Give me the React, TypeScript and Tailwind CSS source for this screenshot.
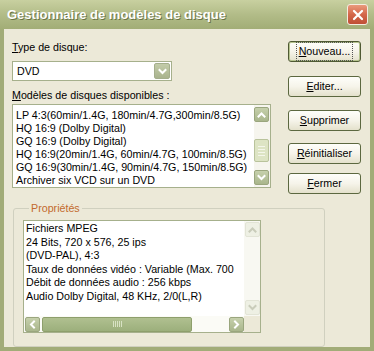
import React from 'react';

const font = "font-['Liberation_Sans',Arial,sans-serif]";

function Chevron({ dir, className }: { dir: 'up' | 'down' | 'left' | 'right'; className?: string }) {
  const d = {
    up: 'M2.5 7.5 L5.5 4.5 L8.5 7.5',
    down: 'M2.5 4 L5.5 7 L8.5 4',
    left: 'M7 2.5 L4 5.5 L7 8.5',
    right: 'M4 2.5 L7 5.5 L4 8.5',
  }[dir];
  return (
    <svg viewBox="0 0 11 11" className={className} width="11" height="11">
      <path d={d} fill="none" stroke="currentColor" strokeWidth="2" strokeLinecap="square" />
    </svg>
  );
}

function ArrowBtn({ dir, faded }: { dir: 'up' | 'down' | 'left' | 'right'; faded?: boolean }) {
  return (
    <div
      className={
        faded
          ? 'w-[15px] h-[15px] shrink-0 rounded-[2px] border border-[#e2e4d6] bg-[#eef0e4] flex items-center justify-center text-[#c9ccba]'
          : 'w-[15px] h-[15px] shrink-0 rounded-[2px] border border-[#9aa67e] bg-gradient-to-b from-[#c6d0ac] to-[#a9b68c] flex items-center justify-center text-white'
      }
    >
      <Chevron dir={dir} />
    </div>
  );
}

function Btn({ label, accel, def }: { label: string; accel: number; def?: boolean }) {
  return (
    <div
      className={
        'w-[73px] h-[21px] rounded-[3px] border flex items-center justify-center bg-gradient-to-b from-[#fefefa] via-[#f6f4ea] to-[#e4e1cc] ' +
        (def ? 'border-[#4f5a33] shadow-[inset_0_0_0_1px_#b6c48e]' : 'border-[#5c6840]')
      }
    >
      <span className={def ? 'px-[2px] border border-dotted border-[#555]' : ''}>
        {label.slice(0, accel)}
        <span className="underline">{label[accel]}</span>
        {label.slice(accel + 1)}
      </span>
    </div>
  );
}

export default function App() {
  const models = [
    'LP 4:3(60min/1.4G, 180min/4.7G,300min/8.5G)',
    'HQ 16:9 (Dolby Digital)',
    'GQ 16:9 (Dolby Digital)',
    'HQ 16:9(20min/1.4G, 60min/4.7G, 100min/8.5G)',
    'GQ 16:9(30min/1.4G, 90min/4.7G, 150min/8.5G)',
    'Archiver six VCD sur un DVD',
  ];
  const props = [
    'Fichiers MPEG',
    '24 Bits, 720 x 576, 25 ips',
    '(DVD-PAL),  4:3',
    'Taux de données vidéo : Variable  (Max.  700',
    'Débit de données audio : 256 kbps',
    'Audio Dolby Digital, 48 KHz, 2/0(L,R)',
  ];

  return (
    <div className={`w-[374px] h-[351px] bg-[#a2ac78] flex flex-col text-[10.7px] text-black ${font}`}>
      {/* title bar */}
      <div className="h-[29px] shrink-0 flex items-center pl-[7px] pr-[6px] bg-gradient-to-b from-[#c8d0a0] via-[#b2bc88] to-[#a2ad76]">
        <div className="flex-1 text-white font-bold text-[13px] [text-shadow:1px_1px_0_#6a7446]">
          Gestionnaire de modèles de disque
        </div>
        <div className="w-[21px] h-[21px] rounded-[3px] border border-[#f4ece0] bg-gradient-to-b from-[#e99a7c] via-[#d4674a] to-[#bf4f35] flex items-center justify-center">
          <svg viewBox="0 0 12 12" width="12" height="12">
            <path d="M2 2 L10 10 M10 2 L2 10" stroke="white" strokeWidth="2.2" strokeLinecap="round" />
          </svg>
        </div>
      </div>

      {/* body */}
      <div className="flex-1 mx-[4px] mb-[4px] bg-[#ece9d8] pl-[8px] pt-[12px] flex flex-col">
        <div className="flex">
          <div className="w-[259px] flex flex-col">
            <div className="h-[13px] leading-[13px]">
              <span className="underline">T</span>ype de disque:
            </div>
            <div className="mt-[7px] w-[160px] h-[20px] border border-[#a6b08c] bg-white flex items-center">
              <div className="flex-1 pl-[4px]">DVD</div>
              <div className="w-[16px] h-[16px] mr-[1px] rounded-[2px] border border-[#a4ae8c] bg-gradient-to-b from-[#c3cca9] to-[#a9b38e] flex items-center justify-center text-white">
                <Chevron dir="down" />
              </div>
            </div>
            <div className="mt-[8px] h-[13px] leading-[13px]">
              <span className="underline">M</span>odèles de disques disponibles :
            </div>
            <div className="mt-[2px] h-[84px] border border-[#a6b08c] bg-white flex">
              <div className="flex-1 overflow-hidden whitespace-nowrap pl-[3px] pt-[4px] leading-[13px]">
                {models.map((m) => (
                  <div key={m}>{m}</div>
                ))}
              </div>
              <div className="w-[16px] py-[2px] pr-[1px] flex flex-col items-center bg-[#f6f5ee]">
                <ArrowBtn dir="up" />
                <div className="flex-1 flex flex-col items-center pt-[17px]">
                  <div className="w-[15px] h-[23px] rounded-[2px] border border-[#b9c39c] bg-[#dde4c4] flex flex-col items-center justify-center gap-[2px]">
                    <div className="w-[7px] h-px bg-[#f4f6ea]" />
                    <div className="w-[7px] h-px bg-[#f4f6ea]" />
                    <div className="w-[7px] h-px bg-[#f4f6ea]" />
                    <div className="w-[7px] h-px bg-[#f4f6ea]" />
                  </div>
                </div>
                <ArrowBtn dir="down" />
              </div>
            </div>
          </div>

          <div className="ml-[17px] flex flex-col">
            <Btn label="Nouveau..." accel={0} def />
            <div className="mt-[14px]"><Btn label="Editer..." accel={0} /></div>
            <div className="mt-[13px]"><Btn label="Supprimer" accel={0} /></div>
            <div className="mt-[12px]"><Btn label="Réinitialiser" accel={0} /></div>
            <div className="mt-[9px]"><Btn label="Fermer" accel={0} /></div>
          </div>
        </div>

        {/* group box */}
        <fieldset className="mt-[8px] ml-[1px] w-[312px] border border-[#d0d0bf] rounded-[3px] px-[9px] pb-[13px]">
          <legend className="ml-[6px] px-[2px] leading-[13px] text-[#c3692d]">Propriétés</legend>
          <div className="mt-[5px] w-[238px] h-[113px] border border-[#a6b08c] bg-white flex flex-col">
            <div className="flex-1 flex min-h-0">
              <div className="flex-1 overflow-hidden whitespace-nowrap pl-[2px] pt-[1px] leading-[13.5px]">
                {props.map((p) => (
                  <div key={p}>{p}</div>
                ))}
              </div>
              <div className="w-[16px] flex flex-col items-center py-[1px] bg-[#f8f8f2]">
                <ArrowBtn dir="up" faded />
                <div className="flex-1" />
                <ArrowBtn dir="down" faded />
              </div>
            </div>
            <div className="h-[16px] flex">
              <div className="flex-1 flex items-center pl-[1px] bg-[#fbfbf6]">
                <ArrowBtn dir="left" />
                <div className="ml-[2px] w-[150px] h-[15px] rounded-[2px] border border-[#8e9f6c] bg-gradient-to-b from-[#b0c090] to-[#9caf7c] flex items-center justify-center gap-[1px]">
                  <div className="w-px h-[6px] bg-[#d8e2c4]" />
                  <div className="w-px h-[6px] bg-[#d8e2c4]" />
                  <div className="w-px h-[6px] bg-[#d8e2c4]" />
                  <div className="w-px h-[6px] bg-[#d8e2c4]" />
                  <div className="w-px h-[6px] bg-[#d8e2c4]" />
                </div>
                <div className="flex-1" />
                <ArrowBtn dir="right" />
              </div>
              <div className="w-[16px] bg-[#ece9d8]" />
            </div>
          </div>
        </fieldset>
      </div>
    </div>
  );
}
